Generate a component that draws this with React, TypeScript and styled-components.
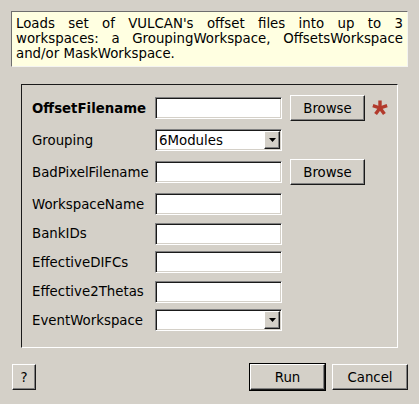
import React from "react";
import styled, { createGlobalStyle } from "styled-components";

const GlobalStyle = createGlobalStyle`
  html, body {
    margin: 0;
    padding: 0;
    background: #d4d0c8;
  }
  body {
    font-family: "DejaVu Sans", Verdana, sans-serif;
    font-size: 13.33px;
    color: #000;
  }
`;

const Dialog = styled.div`
  width: 419px;
  height: 404px;
  box-sizing: border-box;
  padding: 11px 11px 0 11px;
  display: flex;
  flex-direction: column;
`;

const Description = styled.div`
  background: #ffffe1;
  border: 1px solid;
  border-color: #6e6e6e #f4f4f0 #f4f4f0 #6e6e6e;
  padding: 4px 4px 5px 4px;
  line-height: 15px;
  text-align: justify;
`;

const Frame = styled.div`
  margin: 17px 10px 0 10px;
  border: 1px solid;
  border-color: #1a1a1a #fff #fff #1a1a1a;
  padding: 7px 10px 13px 10px;
  display: grid;
  grid-template-columns: 115px 127px 75px 22px;
  grid-template-rows: 32px 32px 32px 32px 27px 30px 29px 28px;
  column-gap: 8px;
  align-items: center;
`;

const Label = styled.span<{ $bold?: boolean }>`
  font-weight: ${(p) => (p.$bold ? "bold" : "normal")};
  white-space: nowrap;
  grid-column: 1;
`;

const TextBox = styled.div`
  grid-column: 2;
  height: 22px;
  box-sizing: border-box;
  background: #fff;
  border: 1px solid;
  border-color: #808080 #fff #fff #808080;
  box-shadow: inset 1px 1px 0 #1a1a1a, inset -1px -1px 0 #d4d0c8;
`;

const Combo = styled(TextBox)`
  display: flex;
  align-items: center;
  padding: 2px 1px 2px 3px;
`;

const ComboText = styled.span`
  flex: 1;
`;

const ComboArrow = styled.div`
  width: 16px;
  height: 18px;
  box-sizing: border-box;
  background: #d4d0c8;
  border: 1px solid;
  border-color: #fff #1a1a1a #1a1a1a #fff;
  box-shadow: inset -1px -1px 0 #808080;
  display: flex;
  align-items: center;
  justify-content: center;
`;

const Button = styled.button<{ $default?: boolean; $width?: number }>`
  font-family: inherit;
  font-size: 13.33px;
  color: #000;
  width: ${(p) => p.$width ?? 75}px;
  height: 26px;
  padding: 0;
  background: #d4d0c8;
  border: 1px solid;
  border-color: #fff #1a1a1a #1a1a1a #fff;
  box-shadow: inset -1px -1px 0 #808080
    ${(p) => (p.$default ? ", 0 0 0 1px #000" : "")};
  margin: ${(p) => (p.$default ? "1px" : "0")};
  cursor: default;
`;

const RowButton = styled(Button)`
  grid-column: 3;
`;

const Star = styled.svg`
  grid-column: 4;
  margin-left: -1px;
`;

const ButtonBar = styled.div`
  margin-top: 15px;
  padding-left: 1px;
  display: flex;
  align-items: center;
`;

const Spacer = styled.div`
  flex: 1;
`;

const BarGap = styled.div`
  width: 6px;
`;

function Arrow() {
  return (
    <svg width="7" height="4" viewBox="0 0 7 4">
      <path d="M0 0H7L3.5 4Z" fill="#000" />
    </svg>
  );
}

function Asterisk() {
  const arms = [-90, -18, 54, 126, 198];
  return (
    <Star width="16" height="16" viewBox="-8 -8 16 16">
      {arms.map((a) => {
        const r = (a * Math.PI) / 180;
        return (
          <line
            key={a}
            x1="0"
            y1="0"
            x2={(7.5 * Math.cos(r)).toFixed(2)}
            y2={(7.5 * Math.sin(r)).toFixed(2)}
            stroke="#b23a2c"
            strokeWidth="3.4"
          />
        );
      })}
    </Star>
  );
}

function App() {
  return (
    <>
      <GlobalStyle />
      <Dialog>
        <Description>
          Loads set of VULCAN's offset files into up to 3 workspaces: a
          GroupingWorkspace, OffsetsWorkspace and/or MaskWorkspace.
        </Description>
        <Frame>
          <Label $bold>OffsetFilename</Label>
          <TextBox />
          <RowButton>Browse</RowButton>
          <Asterisk />

          <Label>Grouping</Label>
          <Combo>
            <ComboText>6Modules</ComboText>
            <ComboArrow>
              <Arrow />
            </ComboArrow>
          </Combo>

          <Label>BadPixelFilename</Label>
          <TextBox />
          <RowButton>Browse</RowButton>

          <Label>WorkspaceName</Label>
          <TextBox />

          <Label>BankIDs</Label>
          <TextBox />

          <Label>EffectiveDIFCs</Label>
          <TextBox />

          <Label>Effective2Thetas</Label>
          <TextBox />

          <Label>EventWorkspace</Label>
          <Combo>
            <ComboText />
            <ComboArrow>
              <Arrow />
            </ComboArrow>
          </Combo>
        </Frame>
        <ButtonBar>
          <Button $width={24}>?</Button>
          <Spacer />
          <Button $default $width={75}>
            Run
          </Button>
          <BarGap />
          <Button $width={76}>Cancel</Button>
        </ButtonBar>
      </Dialog>
    </>
  );
}

export default App;
